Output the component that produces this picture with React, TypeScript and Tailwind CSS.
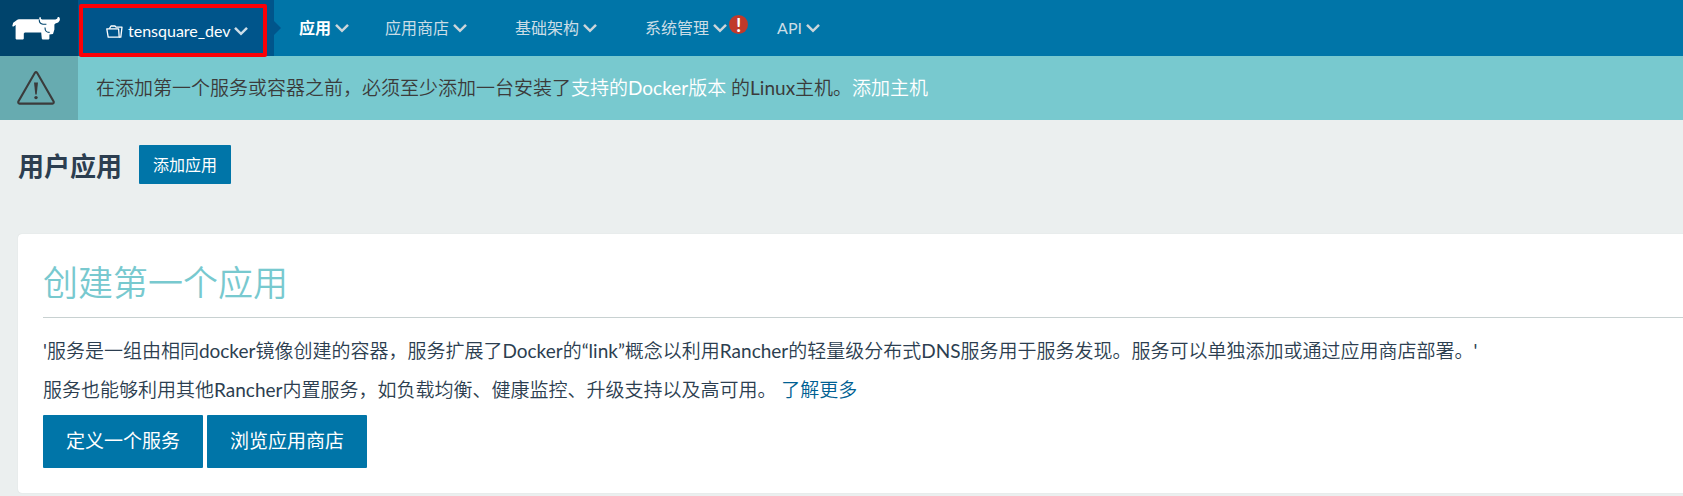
import React from "react";

function Chevron({ className = "" }: { className?: string }) {
  return (
    <svg className={`h-3 w-3.5 shrink-0 ${className}`} viewBox="0 0 14 12" fill="none" aria-hidden="true">
      <path d="M1 2.8 L7 8.8 L13 2.8" stroke="currentColor" strokeWidth="2.5" />
    </svg>
  );
}

function Logo() {
  return (
    <svg className="h-6 w-12" viewBox="0 0 48 24" aria-hidden="true">
      <path
        fill="#fff"
        d="M5 3 Q5.6 2.2 7 2.2 H27.4 Q27 1 27.6 .3 L28.6 0 Q28.6 2.2 30 2.4 H43.4 Q45.6 2.4 45.8 0 L47 0 Q48.4 1.2 47.6 3.8 Q46.8 6.2 43.4 6.4 L42.4 7.4 V12.4 L41 17 L37.4 17.4 V21.6 Q37.4 22.4 36.6 22.4 H30.6 Q29.8 22.4 29.8 21.6 L29.2 15.6 H12.8 L11.8 16.4 V21.6 Q11.8 22.4 11 22.4 H4.4 Q3.6 22.4 3.6 21.6 V8 L1.6 9.6 L.2 9.2 L1.2 5.8 Z"
      />
      <path d="M27.2 2.4 Q27.2 6.6 31 7.2 H34.4" fill="none" stroke="#00446c" strokeWidth="1.1" />
      <path d="M33 10.4 Q33 15.6 37.6 15.4" fill="none" stroke="#00446c" strokeWidth="1.1" />
    </svg>
  );
}

function FolderIcon() {
  return (
    <svg className="h-[13px] w-[17px] shrink-0" viewBox="0 0 17 13" fill="none" stroke="#fff" strokeWidth="1.3" aria-hidden="true">
      <path d="M.8 3.8 H12.6 L13.2 12.2 H2.2 Z" strokeLinejoin="round" />
      <path d="M3.4 3.6 L5 1 H9 L10 2.2 H16 L14.8 12.2 H13" strokeLinejoin="round" />
    </svg>
  );
}

function WarningIcon() {
  return (
    <svg className="h-[34px] w-[38px]" viewBox="0 0 38 34" aria-hidden="true">
      <path d="M17.9 1.8 Q19 .4 20.1 1.8 L36.6 30.4 Q37.2 32.4 35.4 32.6 H2.6 Q.8 32.4 1.4 30.4 Z" fill="none" stroke="#3b3b3b" strokeWidth="2.1" />
      <path d="M17 11.5 H21 L19.7 23.4 H18.3 Z" fill="#3b3b3b" />
      <circle cx="19" cy="26.6" r="1.7" fill="#3b3b3b" />
    </svg>
  );
}

const navItems = [
  { label: "应用", active: true, spacing: "mr-9" },
  { label: "应用商店", spacing: "mr-12" },
  { label: "基础架构", spacing: "mr-12" },
  { label: "系统管理", alert: true, spacing: "mr-[29px]" },
  { label: "API", spacing: "" },
];

export default function App() {
  return (
    <div className="min-h-screen bg-[#ebefef] font-['Lato','Noto_Sans_CJK_SC',sans-serif] text-[#2c3e50]">
      <header className="flex h-14 bg-[#0075a8]">
        <a href="#" aria-label="Rancher" className="flex w-[78px] shrink-0 items-center bg-[#00446c] pl-3 pt-0.5">
          <Logo />
        </a>
        <div className="relative w-[196px] shrink-0 bg-[#00558b]">
          <button type="button" className="flex h-full w-full items-center pl-7 pt-1.5 text-[16px] text-white">
            <FolderIcon />
            <span className="ml-[5px] mr-[3px] leading-6">tensquare_dev</span>
            <Chevron className="text-[#ccdde8]" />
          </button>
          <span className="absolute left-px top-1 h-[53px] w-[188px] rounded-xs border-4 border-[#fb0007]" />
          <svg className="absolute left-full top-[21px] h-3.5 w-[7px]" viewBox="0 0 7 14" aria-hidden="true">
            <path d="M0 0 L7 7 L0 14 Z" fill="#00558b" />
          </svg>
        </div>
        <nav className="flex items-center pl-[25px]">
          {navItems.map((item) => (
            <a
              key={item.label}
              href="#"
              className={`flex items-center gap-1 text-[16px] leading-6 ${item.spacing} ${item.active ? "font-bold text-white" : "text-[#cbdde6]"}`}
            >
              {item.label}
              <span className="flex items-center text-[#cbd5da]">
                <Chevron />
                {item.alert && (
                  <span className="mb-2 ml-0.5 flex size-[19px] items-center justify-center rounded-full bg-[#c0392b] text-[19px] font-bold leading-none text-white">
                    !
                  </span>
                )}
              </span>
            </a>
          ))}
        </nav>
      </header>

      <div className="flex h-16 bg-[#78c9cf]">
        <div className="flex w-[78px] shrink-0 items-center justify-center bg-[#67abb0] pr-1.5">
          <WarningIcon />
        </div>
        <p className="flex-1 self-center pl-[18px] text-[19px] font-[367] leading-7 text-[#3b3b3b]">
          在添加第一个服务或容器之前，必须至少添加一台安装了<a href="#" className="text-white">支持的Docker版本</a> 的Linux主机。<a href="#" className="text-white">添加主机</a>
        </p>
      </div>

      <main className="pb-0.5 pl-[18px]">
        <div className="flex items-center gap-[17px] pb-[50px] pt-[25px]">
          <h1 className="pt-0.5 text-[26px] font-bold leading-9">用户应用</h1>
          <button type="button" className="h-[39px] rounded-[1px] bg-[#0075a8] px-3.5 text-[16px] text-white">
            添加应用
          </button>
        </div>
        <section className="rounded-l bg-white pb-[25px] pl-[25px] shadow-[0_0_1px_#c8cfcf]">
          <h2 className="border-b border-[#c8d1d1] pb-[11px] pt-6 text-[35px] font-[367] leading-[48px] text-[#78c9cf]">
            创建第一个应用
          </h2>
          <div className="pb-1.5 pt-[13px] text-[19px] font-[367] leading-[39px]">
            <p>
              '服务是一组由相同docker镜像创建的容器，服务扩展了Docker的“link”概念以利用Rancher的轻量级分布式DNS服务用于服务发现。服务可以单独添加或通过应用商店部署。'
            </p>
            <p>
              服务也能够利用其他Rancher内置服务，如负载均衡、健康监控、升级支持以及高可用。{" "}
              <a href="#" className="text-[#005f93]">了解更多</a>
            </p>
          </div>
          <div className="flex gap-1 text-[19px] text-white">
            <button type="button" className="h-[53px] rounded-[1px] bg-[#0075a8] px-[23px]">定义一个服务</button>
            <button type="button" className="h-[53px] rounded-[1px] bg-[#0075a8] px-[23px]">浏览应用商店</button>
          </div>
        </section>
      </main>
    </div>
  );
}
